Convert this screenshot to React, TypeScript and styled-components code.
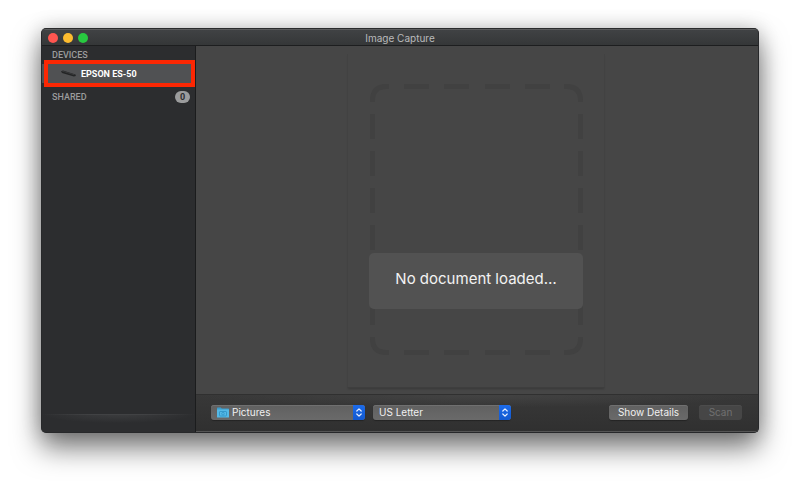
import React from "react";
import styled, { createGlobalStyle, css } from "styled-components";

const GlobalStyle = createGlobalStyle`
  * { box-sizing: border-box; }
  body {
    margin: 0;
    background: #fff;
    font-family: Inter, "Liberation Sans", sans-serif;
    font-size: 10px;
  }
  button, select { font: inherit; color: inherit; }
`;

const Desktop = styled.div`
  display: flex;
  min-height: 100vh;
  padding: 28px 41px 54px;
  overflow: hidden;
`;

const Window = styled.main`
  flex: 1;
  display: flex;
  flex-direction: column;
  border: 1px solid #27282a;
  border-top-color: #2a2b2c;
  border-radius: 5px;
  background: #2c2d2f;
  overflow: hidden;
  box-shadow: 0 15px 28px rgba(0, 0, 0, 0.52), 0 0 20px rgba(0, 0, 0, 0.2);
`;

const TitleBar = styled.header`
  display: grid;
  grid-template-columns: 1fr auto 1fr;
  align-items: center;
  height: 17px;
  padding: 0 6px;
  border-top: 1px solid #5b5c5d;
  border-bottom: 1px solid #1d1e1f;
  background: linear-gradient(#404244, #353738);
`;

const Title = styled.h1`
  margin: 0;
  font-size: 10px;
  line-height: 12px;
  font-weight: 400;
  color: #b9babb;
`;

const Lights = styled.div`
  display: flex;
  gap: 5px;
`;

const Light = styled.button<{ $color: string }>`
  width: 10px;
  height: 10px;
  padding: 0;
  border: 0;
  border-radius: 50%;
  background: ${(p) => p.$color};
`;

const Body = styled.div`
  flex: 1;
  display: flex;
`;

const Sidebar = styled.aside`
  display: flex;
  flex-direction: column;
  flex: 0 0 154px;
  border-right: 1px solid #1b1c1d;
  background: #2c2d2f;
  font-family: Roboto, "Liberation Sans", sans-serif;
`;

const GroupTitle = styled.h2`
  display: flex;
  align-items: center;
  justify-content: space-between;
  height: 18px;
  margin: 0;
  padding: 0 5px 0 10px;
  font-size: 9px;
  font-weight: 500;
  color: #9b9c9d;
`;

const DeviceButton = styled.button`
  position: relative;
  display: flex;
  align-items: center;
  gap: 4px;
  width: 100%;
  height: 19px;
  margin-bottom: 5px;
  padding: 0 18px;
  border: 0;
  background: #505153;
  color: #fff;
  font-size: 9px;
  font-weight: 700;
  &::after {
    content: "";
    position: absolute;
    inset: -4px 0 -4px 2px;
    border: 4px solid #fc2703;
  }
`;

const Count = styled.span`
  width: 15px;
  border-radius: 6px;
  background: #9b9c9d;
  color: #2c2d2f;
  font-size: 9px;
  line-height: 12px;
  font-weight: 700;
  text-align: center;
`;

const SidebarFoot = styled.footer`
  height: 18px;
  margin-top: auto;
  background:
    linear-gradient(90deg, transparent, #414244 35%, #414244 65%, transparent) top / 100% 1px no-repeat,
    radial-gradient(ellipse 50% 9px at 50% 0, #3c3d3f, transparent);
`;

const Content = styled.section`
  flex: 1;
  display: flex;
  flex-direction: column;
  background: #464646;
`;

const Stage = styled.div`
  flex: 1;
  display: flex;
  justify-content: center;
  padding: 8px 2px 6px 0;
`;

const Page = styled.div`
  position: relative;
  display: flex;
  justify-content: center;
  align-items: flex-start;
  width: 258px;
  padding-top: 30px;
  border: 1px solid #424242;
  border-top: 0;
  border-bottom-color: #3e3e3e;
  box-shadow: 0 2px 2px -1px rgba(0, 0, 0, 0.2);
`;

const Message = styled.p`
  position: absolute;
  left: 21px;
  right: 21px;
  bottom: 78px;
  margin: 0;
  padding: 14px 0 18px;
  border-radius: 5px;
  background: #525252;
  color: #f2f2f2;
  font-size: 15px;
  line-height: 24px;
  text-align: center;
`;

const Toolbar = styled.footer`
  display: flex;
  align-items: center;
  gap: 8px;
  height: 38px;
  padding: 0 16px 2px 15px;
  border-top: 1px solid #303030;
  border-bottom: 1px solid #555;
  background:
    radial-gradient(ellipse 50% 12px at 50% 0, #434343, transparent),
    linear-gradient(#383838, #303030);
`;

const controlFace = css`
  height: 15px;
  border: 0;
  border-radius: 3px;
  background: linear-gradient(#606060, #6a6a6a);
  color: #f0f0f0;
  box-shadow: inset 0 1px 0 #707070, 0 1px 1px rgba(0, 0, 0, 0.3);
`;

const Picker = styled.label<{ $wide?: boolean }>`
  position: relative;
  display: flex;
  flex: 0 1 ${(p) => (p.$wide ? 154 : 138)}px;
`;

const Select = styled.select<{ $icon?: boolean }>`
  ${controlFace}
  appearance: none;
  width: 100%;
  padding: 0 16px 0 ${(p) => (p.$icon ? 21 : 6)}px;
`;

const PickerIcon = styled.span`
  position: absolute;
  left: 6px;
  top: 2px;
  display: flex;
  pointer-events: none;
`;

const Arrows = styled.span`
  position: absolute;
  inset: 0 0 0 auto;
  display: grid;
  place-items: center;
  width: 12px;
  border-radius: 0 3px 3px 0;
  background: linear-gradient(#1c6bea, #1259d0);
  pointer-events: none;
`;

const Actions = styled.div`
  display: flex;
  gap: 11px;
  margin-left: auto;
`;

const PushButton = styled.button<{ $wide?: boolean }>`
  ${controlFace}
  width: ${(p) => (p.$wide ? 79 : 43)}px;
  padding: 0;
  line-height: 15px;
  &:disabled {
    background: #464646;
    color: #707070;
    box-shadow: inset 0 1px 0 #4c4c4c;
  }
`;

const ScannerIcon = () => (
  <svg width="17" height="10" viewBox="0 0 17 10" aria-hidden="true">
    <path d="M1 2.200 3 1.600l12.500 3.800.3 1.600-2 .6L2 4z" fill="#242526" />
    <path d="M1.500 2.300 3 1.900l12 3.700-1.300.4z" fill="#3c3d3e" />
  </svg>
);

const FolderIcon = () => (
  <svg width="12" height="11" viewBox="0 0 12 11" aria-hidden="true">
    <path d="M0 1.200Q0 .5.7.5h3.100l1 1h6.500q.7 0 .7.7V10H0z" fill="#3c9ccb" />
    <path d="M0 2.600h12V10q0 .5-.5.5H.5Q0 10.500 0 10z" fill="#55b9e6" />
    <rect x="2.500" y="4.500" width="7" height="4.500" rx=".6" fill="none" stroke="#3499ca" />
    <circle cx="6" cy="6.700" r="1.300" fill="none" stroke="#3499ca" strokeWidth=".9" />
  </svg>
);

const ArrowIcon = () => (
  <svg width="8" height="11" viewBox="0 0 8 11" fill="none" stroke="#e8f0ff" strokeWidth="1.200" strokeLinecap="round" strokeLinejoin="round" aria-hidden="true">
    <path d="M1.800 4 4 1.800 6.200 4M1.800 7 4 9.200 6.200 7" />
  </svg>
);

const columns = [34, 74, 115, 155];
const rows = [30, 67, 104, 141, 179, 216];

const DocumentOutline = () => (
  <svg width="213" height="271" viewBox="0 0 213 271" fill="none" stroke="#414141" strokeWidth="5" aria-hidden="true">
    <path d="M2.500 18V16.500Q2.500 2.500 16.500 2.500H19M194 2.500H196.500Q210.500 2.500 210.500 16.500V18M210.500 253V254.500Q210.500 268.500 196.500 268.500H194M19 268.500H16.500Q2.500 268.500 2.500 254.500V253" />
    {columns.map((x) => (
      <path key={x} d={`M${x} 2.500h25M${x} 268.500h25`} />
    ))}
    {rows.map((y) => (
      <path key={y} d={`M2.500 ${y}v25M210.500 ${y}v25`} />
    ))}
  </svg>
);

export default function App() {
  return (
    <>
      <GlobalStyle />
      <Desktop>
        <Window>
          <TitleBar>
            <Lights>
              <Light $color="#ff5650" aria-label="Close" />
              <Light $color="#fdbc2f" aria-label="Minimize" />
              <Light $color="#28c940" aria-label="Zoom" />
            </Lights>
            <Title>Image Capture</Title>
          </TitleBar>
          <Body>
            <Sidebar>
              <GroupTitle>DEVICES</GroupTitle>
              <DeviceButton>
                <ScannerIcon />
                EPSON ES-50
              </DeviceButton>
              <GroupTitle>
                SHARED <Count>0</Count>
              </GroupTitle>
              <SidebarFoot />
            </Sidebar>
            <Content>
              <Stage>
                <Page>
                  <DocumentOutline />
                  <Message>No document loaded…</Message>
                </Page>
              </Stage>
              <Toolbar>
                <Picker $wide>
                  <Select $icon aria-label="Save to">
                    <option>Pictures</option>
                  </Select>
                  <PickerIcon>
                    <FolderIcon />
                  </PickerIcon>
                  <Arrows>
                    <ArrowIcon />
                  </Arrows>
                </Picker>
                <Picker>
                  <Select aria-label="Paper size">
                    <option>US Letter</option>
                  </Select>
                  <Arrows>
                    <ArrowIcon />
                  </Arrows>
                </Picker>
                <Actions>
                  <PushButton $wide>Show Details</PushButton>
                  <PushButton disabled>Scan</PushButton>
                </Actions>
              </Toolbar>
            </Content>
          </Body>
        </Window>
      </Desktop>
    </>
  );
}
